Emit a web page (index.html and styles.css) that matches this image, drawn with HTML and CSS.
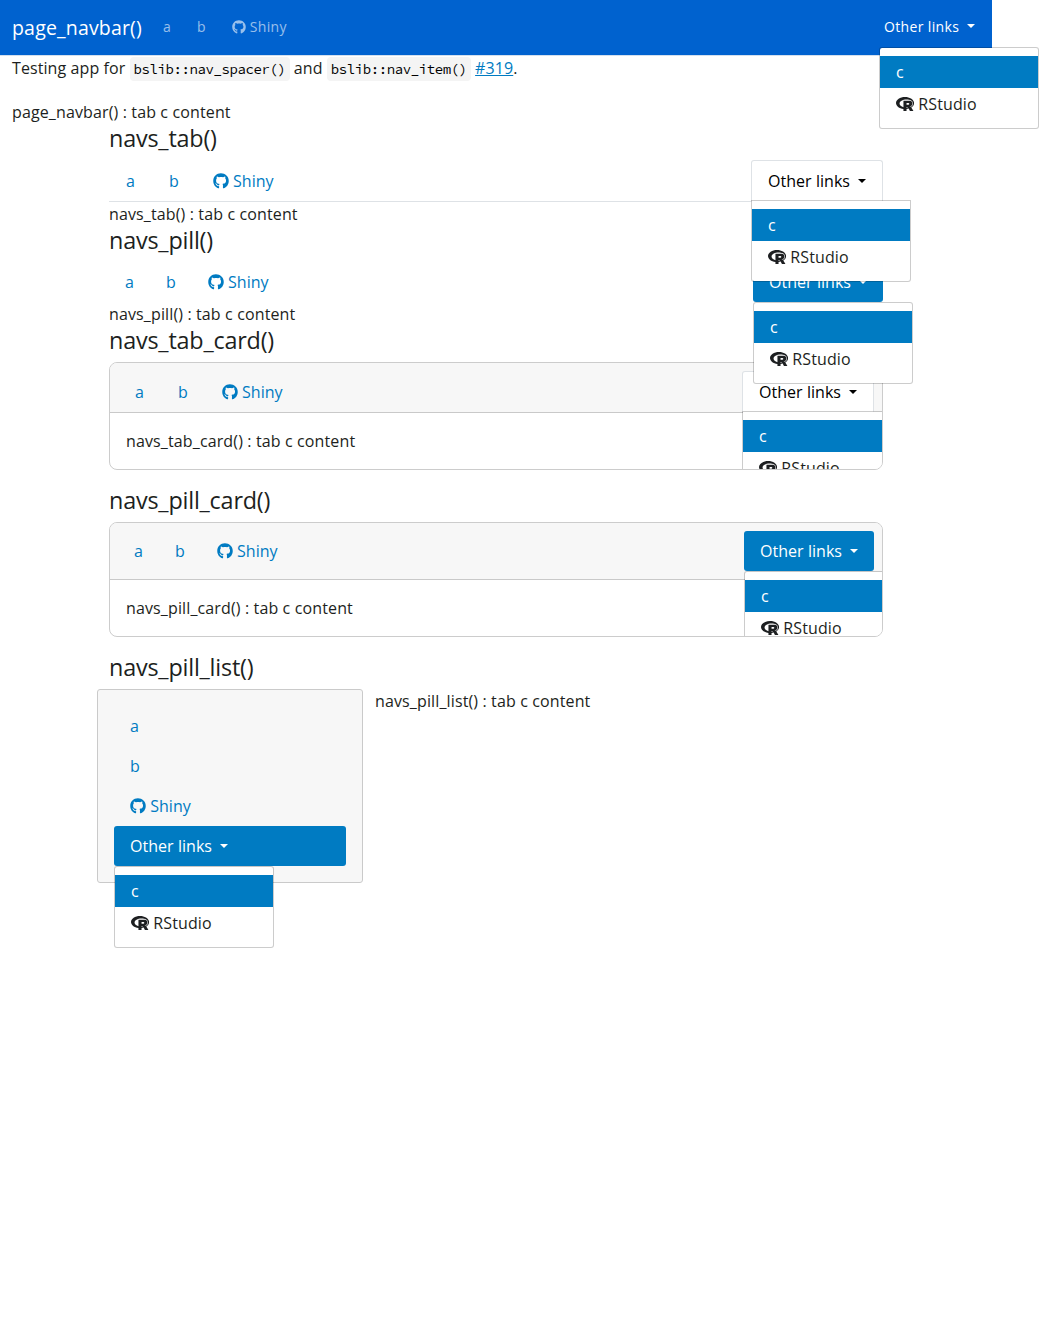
FILE: index.html
```html
<!DOCTYPE html>
<html lang="en">
<head>
<meta charset="utf-8">
<title>page_navbar()</title>
<link rel="stylesheet" href="styles.css">
</head>
<body>
<svg class="sprite" aria-hidden="true">
  <symbol id="github" viewBox="0 0 496 512"><path d="M165.9 397.4c0 2-2.3 3.6-5.2 3.6-3.3.3-5.6-1.3-5.6-3.6 0-2 2.3-3.6 5.2-3.6 3-.3 5.6 1.3 5.6 3.6zm-31.1-4.5c-.7 2 1.3 4.3 4.3 4.9 2.6 1 5.6 0 6.2-2s-1.3-4.3-4.3-5.2c-2.6-.7-5.5.3-6.2 2.3zm44.2-1.7c-2.9.7-4.9 2.6-4.6 4.9.3 2 2.9 3.3 5.9 2.6 2.9-.7 4.9-2.6 4.6-4.6-.3-1.9-3-3.2-5.9-2.9zM244.8 8C106.1 8 0 113.3 0 252c0 110.9 69.8 205.8 169.5 239.2 12.8 2.3 17.3-5.6 17.3-12.1 0-6.2-.3-40.4-.3-61.4 0 0-70 15-84.7-29.8 0 0-11.4-29.1-27.8-36.6 0 0-22.9-15.7 1.6-15.4 0 0 24.9 2 38.6 25.8 21.9 38.6 58.6 27.5 72.9 20.9 2.3-16 8.8-27.1 16-33.7-55.9-6.2-112.3-14.3-112.3-110.5 0-27.5 7.6-41.3 23.6-58.9-2.6-6.5-11.1-33.3 2.6-67.9 20.9-6.5 69 27 69 27 20-5.6 41.5-8.5 62.8-8.5s42.8 2.9 62.8 8.5c0 0 48.1-33.6 69-27 13.7 34.7 5.2 61.4 2.6 67.9 16 17.7 25.8 31.5 25.8 58.9 0 96.5-58.9 104.2-114.8 110.5 9.2 7.9 17 22.9 17 46.4 0 33.7-.3 75.4-.3 83.6 0 6.5 4.6 14.4 17.3 12.1C428.2 457.8 496 362.9 496 252 496 113.3 383.5 8 244.8 8z"/></symbol>
  <symbol id="rproject" viewBox="0 0 581 512"><path d="M581 226.6C581 119.1 450.9 32 290.5 32S0 119.1 0 226.6C0 322.4 103.3 402 239.4 418.1V480h99.1v-61.5c24.3-2.7 47.6-7.4 69.4-13.9L448 480h112l-67.4-113.7c54.5-35.4 88.4-84.9 88.4-139.7zm-466.8 14.5c0-73.5 98.9-133 220.8-133s211.9 40.7 211.9 133c0 50.1-26.5 85-70.3 106.4-2.4-1.6-4.7-2.9-6.4-3.7-10.2-5.2-27.8-10.5-27.8-10.5s86.6-6.4 86.6-92.7-90.6-87.9-90.6-87.9h-199V361c-74.1-21.5-125.2-67.1-125.2-119.9zm225.1 38.3v-55.6c57.8 0 87.8-6.8 87.8 27.3 0 36.5-38.2 28.3-87.8 28.3zm-.9 72.5H365c10.8 0 18.9 11.7 24 19.2-16.1 1.9-33 2.8-50.6 2.9v-22.1z"/></symbol>
</svg>
<nav class="navbar">
  <a class="brand">page_navbar()</a>
  <ul class="nav navbar-nav">
    <li><a class="link">a</a></li>
    <li><a class="link">b</a></li>
    <li><a class="link"><svg class="icon gh"><use href="#github"/></svg> Shiny</a></li>
    <li class="spacer"></li>
    <li class="dropdown"><a class="link toggle active">Other links </a>
      <div class="menu"><a class="item active">c</a><a class="item"><svg class="icon r"><use href="#rproject"/></svg> RStudio</a></div></li>
  </ul>
</nav>
<header class="intro">Testing app for <code>bslib::nav_spacer()</code> and <code>bslib::nav_item()</code> <a class="ref">#319</a>.</header>
<p class="content">page_navbar() : tab c content</p>
<main class="container">
  <h4>navs_tab()</h4>
  <ul class="nav tabs">
    <li><a class="link">a</a></li>
    <li><a class="link">b</a></li>
    <li><a class="link"><svg class="icon gh"><use href="#github"/></svg> Shiny</a></li>
    <li class="spacer"></li>
    <li class="dropdown"><a class="link toggle active">Other links </a>
      <div class="menu"><a class="item active">c</a><a class="item"><svg class="icon r"><use href="#rproject"/></svg> RStudio</a></div></li>
  </ul>
  <p>navs_tab() : tab c content</p>

  <h4>navs_pill()</h4>
  <ul class="nav pills">
    <li><a class="link">a</a></li>
    <li><a class="link">b</a></li>
    <li><a class="link"><svg class="icon gh"><use href="#github"/></svg> Shiny</a></li>
    <li class="spacer"></li>
    <li class="dropdown"><a class="link toggle active">Other links </a>
      <div class="menu"><a class="item active">c</a><a class="item"><svg class="icon r"><use href="#rproject"/></svg> RStudio</a></div></li>
  </ul>
  <p>navs_pill() : tab c content</p>

  <h4>navs_tab_card()</h4>
  <section class="card">
    <div class="card-header tab-header">
      <ul class="nav tabs">
        <li><a class="link">a</a></li>
        <li><a class="link">b</a></li>
        <li><a class="link"><svg class="icon gh"><use href="#github"/></svg> Shiny</a></li>
        <li class="spacer"></li>
        <li class="dropdown"><a class="link toggle active">Other links </a>
          <div class="menu"><a class="item active">c</a><a class="item"><svg class="icon r"><use href="#rproject"/></svg> RStudio</a></div></li>
      </ul>
    </div>
    <div class="card-body">navs_tab_card() : tab c content</div>
  </section>

  <h4>navs_pill_card()</h4>
  <section class="card">
    <div class="card-header">
      <ul class="nav pills">
        <li><a class="link">a</a></li>
        <li><a class="link">b</a></li>
        <li><a class="link"><svg class="icon gh"><use href="#github"/></svg> Shiny</a></li>
        <li class="spacer"></li>
        <li class="dropdown"><a class="link toggle active">Other links </a>
          <div class="menu"><a class="item active">c</a><a class="item"><svg class="icon r"><use href="#rproject"/></svg> RStudio</a></div></li>
      </ul>
    </div>
    <div class="card-body">navs_pill_card() : tab c content</div>
  </section>

  <h4>navs_pill_list()</h4>
  <div class="row">
    <div class="well">
      <ul class="nav pills stacked">
        <li><a class="link">a</a></li>
        <li><a class="link">b</a></li>
        <li><a class="link"><svg class="icon gh"><use href="#github"/></svg> Shiny</a></li>
        <li class="dropdown"><a class="link toggle active">Other links </a>
          <div class="menu"><a class="item active">c</a><a class="item"><svg class="icon r"><use href="#rproject"/></svg> RStudio</a></div></li>
      </ul>
    </div>
    <div class="list-content">navs_pill_list() : tab c content</div>
  </div>
</main>
</body>
</html>
```
FILE: styles.css
```css
* { box-sizing: border-box; }

body {
  margin: 0;
  width: 1039px;
  min-height: 1323px;
  padding-right: 47px;
  background: #fff;
  color: #1d1f21;
  font: 16px/24px "Open Sans", sans-serif;
  letter-spacing: 0.13px;
}

p { margin: 0; }

h4 {
  margin: 0 0 8px;
  font-size: 23.38px;
  line-height: 28px;
  font-weight: 400;
  letter-spacing: -0.2px;
}

.sprite { position: absolute; width: 0; height: 0; }

.icon {
  height: 1em;
  vertical-align: -0.125em;
  fill: currentColor;
  overflow: visible;
}
.gh { width: 1em; }
.r { width: 1.13em; }

/* Navs */
.nav {
  display: flex;
  margin: 0;
  padding: 0;
  list-style: none;
  letter-spacing: 0.04px;
}
.spacer { flex: 1; }
.link {
  display: block;
  padding: 8px 16px;
  color: #007bc2;
  white-space: pre;
}
.dropdown { position: relative; }
.toggle::after {
  content: "";
  display: inline-block;
  margin-left: 0.255em;
  vertical-align: 0.255em;
  border: 0.3em solid transparent;
  border-top-color: currentColor;
  border-bottom: 0;
}

.tabs { border-bottom: 1px solid #dee2e6; }
.tabs .dropdown { width: 132px; }
.tabs .link {
  margin-bottom: -1px;
  border: 1px solid transparent;
  border-radius: 3px 3px 0 0;
}
.tabs .link.active {
  border-color: #dee2e6 #dee2e6 #fff;
  background: #fff;
  color: #000;
}
.tabs .menu { margin-top: -1px; border-radius: 0 0 3px 3px; }

.pills .dropdown { width: 130px; }
.pills .link { border-radius: 3px; }
.pills .link.active { background: #007bc2; color: #fff; }
.stacked { flex-direction: column; }
.stacked .dropdown { width: auto; }

/* Dropdown menu */
.menu {
  position: absolute;
  z-index: 10;
  top: 100%;
  left: 0;
  width: 160px;
  padding: 8px 0;
  border: 1px solid rgba(0, 0, 0, 0.2);
  border-radius: 3px;
  background: #fff;
  background-clip: padding-box;
  font-size: 16px;
  line-height: 24px;
  letter-spacing: 0.1px;
}
.item { display: block; padding: 4px 16px; white-space: nowrap; }
.item.active { background: #007bc2; color: #fff; }

/* Navbar */
.navbar {
  display: flex;
  align-items: center;
  height: 56px;
  padding: 0 12px;
  border-bottom: 1px solid #d2dfee;
  background: #0062cf;
  background-clip: padding-box;
}
.brand {
  margin-right: 16px;
  color: #fff;
  font-size: 19.5px;
  line-height: 30px;
  letter-spacing: 0.18px;
}
.navbar-nav { flex: 1; gap: 16px; padding-bottom: 2px; }
.navbar-nav .dropdown { width: 101px; }
.navbar-nav .link {
  padding: 8px 5px;
  color: rgba(255, 255, 255, 0.6);
  font-size: 14px;
  line-height: 21px;
  letter-spacing: 0.3px;
}
.navbar-nav .link.active { color: #fff; font-weight: 500; letter-spacing: 0.35px; }
.navbar-nav .menu { margin-top: 2px; }

.intro { height: 44px; padding-left: 12px; letter-spacing: 0.09px; }
.content { padding-left: 12px; }
code {
  padding: 3px 4px;
  border-radius: 4px;
  background: #f4f4f4;
  color: #000;
  font-family: "Source Code Pro", "Noto Sans Mono CJK SC", "Noto Sans Mono", "Liberation Mono", monospace;
  font-size: 14px;
  letter-spacing: -0.4px;
}
.ref { color: #007bc2; text-decoration: underline; }

.container { margin: 0 97px; padding: 0 12px; }

/* Cards */
.card {
  margin-bottom: 16px;
  overflow: hidden;
  border: 1px solid rgba(0, 0, 0, 0.2);
  border-radius: 8px;
}
.card-header {
  padding: 8px;
  border-bottom: 1px solid #c9c9c9;
  background: #f7f7f7;
}
.tab-header { padding-bottom: 0; }
.tab-header .tabs { border-bottom: 0; }
.tab-header .link { margin-bottom: 0; height: 41px; }
.tab-header .dropdown { height: 41px; }
.card-body { padding: 16px; }

.row { display: flex; margin: 0 -12px; }
.well {
  width: 266px;
  padding: 16px;
  border: 1px solid #cacaca;
  border-radius: 3px;
  background: #f7f7f7;
}
.list-content { padding-left: 12px; }
```
